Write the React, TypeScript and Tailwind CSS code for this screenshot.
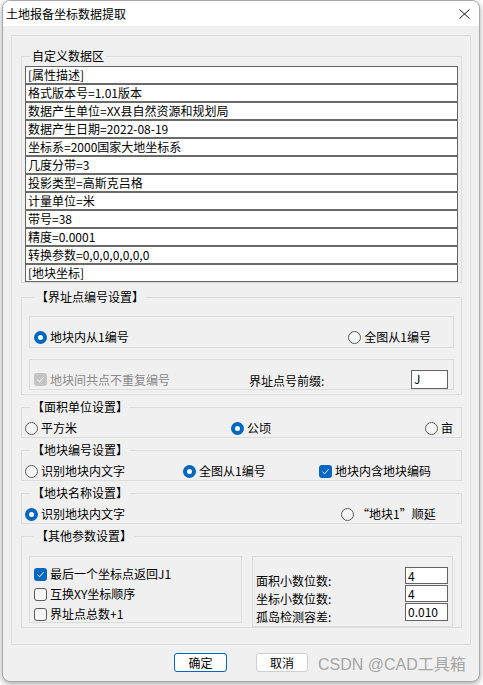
import React from "react";

const rows = [
  "[属性描述]",
  "格式版本号=1.01版本",
  "数据产生单位=XX县自然资源和规划局",
  "数据产生日期=2022-08-19",
  "坐标系=2000国家大地坐标系",
  "几度分带=3",
  "投影类型=高斯克吕格",
  "计量单位=米",
  "带号=38",
  "精度=0.0001",
  "转换参数=0,0,0,0,0,0,0",
  "[地块坐标]",
];

function GroupBox({ title, className = "", children }: { title: string; className?: string; children: React.ReactNode }) {
  return (
    <fieldset className={`border border-[#dcdcdc] ${className}`}>
      <legend className="ml-[5px] px-[2px] text-[12px] leading-[16px] text-black">{title}</legend>
      {children}
    </fieldset>
  );
}

function Radio({ checked = false, label }: { checked?: boolean; label: string }) {
  return (
    <div className="flex items-center h-[16px]">
      {checked ? (
        <span className="w-[13px] h-[13px] rounded-full bg-[#0067c0] flex items-center justify-center shrink-0">
          <span className="w-[5px] h-[5px] rounded-full bg-white" />
        </span>
      ) : (
        <span className="w-[13px] h-[13px] rounded-full border border-[#5a5a5a] bg-[#f6f6f6] shrink-0" />
      )}
      <span className="ml-[3px] text-[12px] leading-[16px] whitespace-nowrap">{label}</span>
    </div>
  );
}

function Check({ checked = false, disabled = false, label }: { checked?: boolean; disabled?: boolean; label: string }) {
  let box = "border border-[#5a5a5a] bg-[#f6f6f6]";
  if (checked) box = disabled ? "bg-[#c4c4c4]" : "bg-[#0067c0]";
  return (
    <div className="flex items-center h-[16px]">
      <span className={`w-[13px] h-[13px] rounded-[3px] flex items-center justify-center shrink-0 ${box}`}>
        {checked && (
          <svg width="9" height="9" viewBox="0 0 9 9">
            <path d="M1.5 4.8 L3.6 6.8 L7.6 2.2" fill="none" stroke="white" strokeWidth="1" />
          </svg>
        )}
      </span>
      <span className={`ml-[3px] text-[12px] leading-[16px] whitespace-nowrap ${disabled ? "text-[#8a8a8a]" : "text-black"}`}>
        {label}
      </span>
    </div>
  );
}

function TextBox({ value, className = "" }: { value: string; className?: string }) {
  return (
    <div className={`bg-white border border-[#646464] pl-[2px] text-[12px] leading-[15px] ${className}`}>{value}</div>
  );
}

export default function App() {
  return (
    <div className="w-[483px] h-[685px] bg-white relative overflow-hidden font-['Noto_Sans_CJK_SC',sans-serif] text-black">
      <div className="ml-[2px] w-[478px] h-[682px] rounded-[8px] border border-[#a8a8a8] bg-[#f0f0f0] flex flex-col overflow-hidden shadow-[0_2px_6px_rgba(0,0,0,0.35)]">
        {/* title bar */}
        <div className="h-[25px] bg-white flex items-center justify-between pl-[3px] pr-[9px] shrink-0">
          <span className="text-[12px] leading-[16px]">土地报备坐标数据提取</span>
          <svg width="11" height="10" viewBox="0 0 11 10">
            <path d="M0.5 0.5 L10.5 9.5 M10.5 0.5 L0.5 9.5" stroke="#1a1a1a" strokeWidth="1" fill="none" />
          </svg>
        </div>

        <div className="flex-1 px-[8px] pt-[9px]">
          <div className="h-[610px] border border-[#dcdcdc] pl-[9px] pr-[8px] pt-[12px]">
            {/* 自定义数据区 */}
            <GroupBox title="自定义数据区" className="px-[3px]">
              <div className="mt-[2px] border border-[#646464] bg-white">
                {rows.map((r, i) => (
                  <div
                    key={r}
                    className={`h-[16px] pl-[2px] text-[12px] leading-[16px] whitespace-nowrap ${i > 0 ? "border-t-2 border-[#6a6a6a] h-[18px]" : ""}`}
                  >
                    {r}
                  </div>
                ))}
              </div>
            </GroupBox>

            {/* 界址点编号设置 */}
            <GroupBox title="【界址点编号设置】" className="mt-[6px] px-[7px] pb-[4px]">
              <div className="mt-[11px] h-[32px] border border-[#dcdcdc] pl-[4px] pr-[22px] pt-[12px] flex items-start justify-between">
                <Radio checked label="地块内从1编号" />
                <Radio label="全图从1编号" />
              </div>
              <div className="mt-[11px] h-[31px] border border-[#dcdcdc] pl-[4px] pr-[5px] pt-[10px] flex items-center">
                <div className="w-[215px]">
                  <Check checked disabled label="地块间共点不重复编号" />
                </div>
                <span className="flex-1 text-[12px] leading-[16px] mt-[3px]">界址点号前缀:</span>
                <TextBox value="J" className="w-[37px] h-[19px]" />
              </div>
            </GroupBox>

            {/* 面积单位设置 */}
            <GroupBox title="【面积单位设置】" className="mt-[4px] pl-[3px] pr-[8px] pt-[5px] pb-[1px]">
              <div className="flex justify-between">
                <Radio label="平方米" />
                <Radio checked label="公顷" />
                <Radio label="亩" />
              </div>
            </GroupBox>

            {/* 地块编号设置 */}
            <GroupBox title="【地块编号设置】" className="mt-[4px] pl-[3px] pr-[8px] pt-[5px] pb-[1px]">
              <div className="flex">
                <div className="w-[158px]">
                  <Radio label="识别地块内文字" />
                </div>
                <div className="w-[136px]">
                  <Radio checked label="全图从1编号" />
                </div>
                <Check checked label="地块内含地块编码" />
              </div>
            </GroupBox>

            {/* 地块名称设置 */}
            <GroupBox title="【地块名称设置】" className="mt-[4px] pl-[3px] pr-[8px] pt-[5px] pb-[1px]">
              <div className="flex">
                <div className="w-[316px]">
                  <Radio checked label="识别地块内文字" />
                </div>
                <Radio label="“地块1”顺延" />
              </div>
            </GroupBox>

            {/* 其他参数设置 */}
            <GroupBox title="【其他参数设置】" className="mt-[4px] px-[7px]">
              <div className="mt-[12px] flex items-start gap-[10px]">
                <div className="w-[213px] h-[67px] border border-[#dcdcdc] pl-[4px] pt-[9px] flex flex-col gap-[4px]">
                  <Check checked label="最后一个坐标点返回J1" />
                  <Check label="互换XY坐标顺序" />
                  <Check label="界址点总数+1" />
                </div>
                <div className="w-[201px] h-[71px] border border-[#dcdcdc] pl-[3px] pr-[4px] flex justify-between">
                  <div className="pt-[15px] text-[12px] leading-[18px]">
                    <div>面积小数位数:</div>
                    <div>坐标小数位数:</div>
                    <div>孤岛检测容差:</div>
                  </div>
                  <div className="pt-[10px] flex flex-col gap-[1px]">
                    <TextBox value="4" className="w-[43px] h-[17px]" />
                    <TextBox value="4" className="w-[43px] h-[17px]" />
                    <TextBox value="0.010" className="w-[43px] h-[18px]" />
                  </div>
                </div>
              </div>
            </GroupBox>
          </div>

          {/* buttons */}
          <div className="mt-[8px] flex pl-[163px] gap-[29px]">
            <button className="w-[53px] h-[19px] bg-white border border-[#0067c0] rounded-[3px] text-[12px] leading-[16px]">
              确定
            </button>
            <button className="w-[52px] h-[19px] bg-white border border-[#cfcfcf] rounded-[3px] text-[12px] leading-[16px]">
              取消
            </button>
          </div>
        </div>
      </div>

      {/* CSDN watermark */}
      <div className="absolute left-[318px] top-[655px] text-[16px] leading-[20px] text-[#a6a6a6] font-['Liberation_Sans','Noto_Sans_CJK_SC',sans-serif] whitespace-nowrap">
        CSDN @CAD工具箱
      </div>
    </div>
  );
}
